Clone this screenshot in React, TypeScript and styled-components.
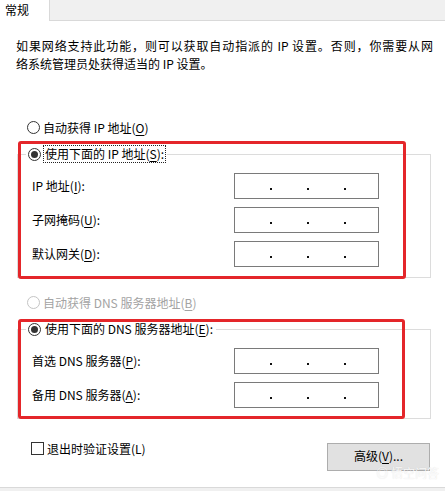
import styled, { createGlobalStyle } from "styled-components";

const GlobalStyle = createGlobalStyle`
  html, body {
    margin: 0;
    padding: 0;
    background: #fff;
  }
  body {
    font-family: "Noto Sans CJK SC", "Noto Sans", sans-serif;
    font-size: 12px;
    color: #000;
  }
`;

const Page = styled.div`
  position: relative;
  width: 445px;
  height: 491px;
  overflow: hidden;
  background: #fff;
`;

const TabStrip = styled.div`
  display: flex;
  height: 21px;
`;

const Tab = styled.div`
  width: 44px;
  padding-left: 5px;
  line-height: 19px;
  background: #fff;
`;

const TabFiller = styled.div`
  flex: 1;
  background: #f0f0f0;
  border-left: 1px solid #d9d9d9;
  border-bottom: 1px solid #d9d9d9;
`;

const Content = styled.div`
  padding: 0 14px 0 17px;
`;

const Intro = styled.div`
  margin: 16px 0 0 -1px;
  line-height: 18px;
`;

const IntroLine = styled.div<{ $justify?: boolean }>`
  width: ${(p) => (p.$justify ? "417px" : "auto")};
  text-align: ${(p) => (p.$justify ? "justify" : "left")};
  text-align-last: ${(p) => (p.$justify ? "justify" : "auto")};
  white-space: nowrap;
`;

const RadioRow = styled.div<{ $mt: number; $disabled?: boolean }>`
  display: flex;
  align-items: center;
  height: 18px;
  margin: ${(p) => p.$mt}px 0 0 10px;
  color: ${(p) => (p.$disabled ? "#a3a3a3" : "#000")};
`;

const Radio = styled.span<{ $checked?: boolean; $disabled?: boolean }>`
  position: relative;
  box-sizing: border-box;
  width: 13px;
  height: 13px;
  margin-right: 3px;
  border-radius: 50%;
  border: 1px solid ${(p) => (p.$disabled ? "#c4c4c4" : "#333")};
  background: #fff;

  &::after {
    content: "";
    display: ${(p) => (p.$checked ? "block" : "none")};
    position: absolute;
    left: 2px;
    top: 2px;
    width: 7px;
    height: 7px;
    border-radius: 50%;
    background: #333;
  }
`;

const Key = styled.u`
  text-underline-offset: 2px;
`;

const Section = styled.div<{ $mt: number }>`
  position: relative;
  margin-top: ${(p) => p.$mt}px;
`;

const GroupBox = styled.div`
  border: 1px solid #dcdcdc;
  padding: 0 0 10px 14px;
`;

const GroupHeader = styled.div`
  display: flex;
  align-items: center;
  width: fit-content;
  height: 18px;
  margin: -10px 0 0 -6px;
  padding: 0 2px;
  background: #fff;
`;

const FocusText = styled.span<{ $focus?: boolean }>`
  line-height: 16px;
  padding: 0 1px;
  outline: ${(p) => (p.$focus ? "1px dotted #222" : "none")};
`;

const Fields = styled.div`
  display: flex;
  flex-direction: column;
  gap: 8px;
  margin-top: 10px;
`;

const FieldRow = styled.div`
  display: flex;
  align-items: center;
`;

const FieldLabel = styled.span`
  width: 202px;
  line-height: 18px;
`;

const IpBox = styled.div`
  box-sizing: border-box;
  display: flex;
  width: 145px;
  height: 26px;
  border: 1px solid #7a7a7a;
  background: #fff;
`;

const IpPart = styled.span`
  width: 35px;
`;

const IpDot = styled.span`
  align-self: flex-end;
  width: 2px;
  height: 2px;
  margin-bottom: 8px;
  background: #111;
`;

const Annotation = styled.div<{ $top: number; $w: number; $h: number }>`
  position: absolute;
  left: 1px;
  top: ${(p) => p.$top}px;
  width: ${(p) => p.$w}px;
  height: ${(p) => p.$h}px;
  box-sizing: border-box;
  border: 3px solid #e4262a;
  border-radius: 3px;
  pointer-events: none;
`;

const Footer = styled.div`
  display: flex;
  justify-content: space-between;
  align-items: flex-start;
  margin-top: 20px;
  padding-left: 14px;
`;

const CheckRow = styled.label`
  display: flex;
  align-items: center;
  height: 18px;
`;

const CheckBox = styled.span`
  box-sizing: border-box;
  width: 13px;
  height: 13px;
  margin-right: 3px;
  border: 1px solid #333;
  background: #fff;
`;

const AdvancedButton = styled.button`
  box-sizing: border-box;
  width: 103px;
  height: 28px;
  margin: 4px 1px 0 0;
  padding: 0 0 4px;
  font: inherit;
  color: #000;
  background: #e1e1e1;
  border: 1px solid #adadad;
`;

const BottomBar = styled.div`
  position: absolute;
  left: 0;
  right: 0;
  bottom: 0;
  height: 3px;
  background: #f0f0f0;
  border-top: 1px solid #d9d9d9;
`;

const Watermark = styled.div`
  position: absolute;
  right: 6px;
  top: 466px;
  display: flex;
  align-items: center;
  gap: 4px;
  font-size: 12px;
  line-height: 14px;
  color: rgba(255, 255, 255, 0.9);
  text-shadow: 0 0 1px rgba(0, 0, 0, 0.15);
  pointer-events: none;
`;

type Field = { label: string; key: string };

const IpInput = () => (
  <IpBox>
    <IpPart />
    <IpDot />
    <IpPart />
    <IpDot />
    <IpPart />
    <IpDot />
  </IpBox>
);

const FieldList = ({ fields }: { fields: Field[] }) => (
  <Fields>
    {fields.map((f) => (
      <FieldRow key={f.label}>
        <FieldLabel>
          {f.label}(<Key>{f.key}</Key>):
        </FieldLabel>
        <IpInput />
      </FieldRow>
    ))}
  </Fields>
);

const ipFields: Field[] = [
  { label: "IP 地址", key: "I" },
  { label: "子网掩码", key: "U" },
  { label: "默认网关", key: "D" },
];

const dnsFields: Field[] = [
  { label: "首选 DNS 服务器", key: "P" },
  { label: "备用 DNS 服务器", key: "A" },
];

export default function App() {
  return (
    <Page>
      <GlobalStyle />
      <TabStrip>
        <Tab>常规</Tab>
        <TabFiller />
      </TabStrip>

      <Content>
        <Intro>
          <IntroLine $justify>
            如果网络支持此功能，则可以获取自动指派的 IP 设置。否则，你需要从网
          </IntroLine>
          <IntroLine>络系统管理员处获得适当的 IP 设置。</IntroLine>
        </Intro>

        <RadioRow $mt={45}>
          <Radio />
          <span>
            自动获得 IP 地址(<Key>O</Key>)
          </span>
        </RadioRow>

        <Section $mt={18}>
          <GroupBox>
            <GroupHeader>
              <Radio $checked />
              <FocusText $focus>
                使用下面的 IP 地址(<Key>S</Key>):
              </FocusText>
            </GroupHeader>
            <FieldList fields={ipFields} />
          </GroupBox>
          <Annotation $top={-13} $w={388} $h={138} />
        </Section>

        <RadioRow $mt={15} $disabled>
          <Radio $disabled />
          <span>
            自动获得 DNS 服务器地址(<Key>B</Key>)
          </span>
        </RadioRow>

        <Section $mt={18}>
          <GroupBox>
            <GroupHeader>
              <Radio $checked />
              <FocusText>
                使用下面的 DNS 服务器地址(<Key>E</Key>):
              </FocusText>
            </GroupHeader>
            <FieldList fields={dnsFields} />
          </GroupBox>
          <Annotation $top={-10} $w={387} $h={100} />
        </Section>

        <Footer>
          <CheckRow>
            <CheckBox />
            <span>退出时验证设置(L)</span>
          </CheckRow>
          <AdvancedButton>
            高级(<Key>V</Key>)...
          </AdvancedButton>
        </Footer>
      </Content>

      <Watermark>◎ 悟空问答</Watermark>
      <BottomBar />
    </Page>
  );
}
